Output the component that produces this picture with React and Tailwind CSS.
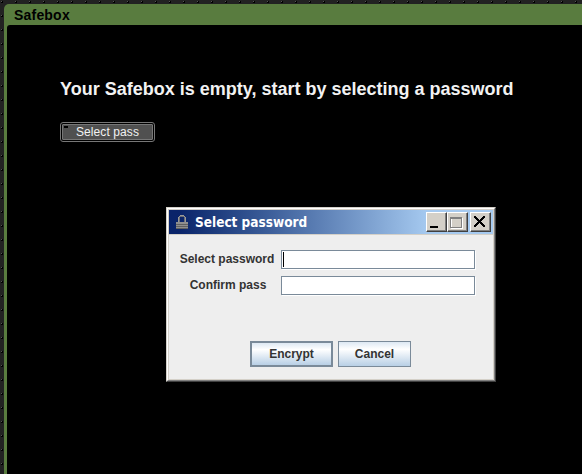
const bevel = "border border-t-white border-l-white border-r-[#404040] border-b-[#404040] bg-[#d4d0c8] shadow-[inset_-1px_-1px_0_#808080]";

function DotPattern() {
  return (
    <svg className="absolute inset-0" width="582" height="474" shapeRendering="crispEdges">
      <defs>
        <pattern id="dots" width="14" height="14" patternUnits="userSpaceOnUse">
          <rect width="14" height="14" fill="#222222" />
          <rect x="1" y="1" width="2" height="2" fill="#000" />
          <rect x="1" y="1" width="1" height="1" fill="#555" />
        </pattern>
      </defs>
      <rect width="582" height="474" fill="url(#dots)" />
    </svg>
  );
}

function Lock() {
  return (
    <svg width="12" height="15" viewBox="0 0 12 15" shapeRendering="crispEdges">
      <path d="M4 0h4v1H4zM3 1h6v1H3zM2 2h2v5H2zM8 2h2v5H8z" fill="#999999" />
      <path d="M4 1h4v1H4zM3 2h1v5H3zM8 2h1v5H8z" fill="#6c6e76" />
      <path d="M0 7h12v7H0z" fill="#8f8f8f" />
      <path d="M0 9h12v1H0zM0 11h12v1H0zM0 13h12v1H0z" fill="#606060" />
    </svg>
  );
}

function Field({ focus }) {
  return (
    <div className="flex h-[19px] w-[194px] items-center border border-[#7a8a99] bg-white shadow-[1px_1px_0_#fff]">
      {focus && <span className="ml-px h-[15px] w-px bg-black" />}
    </div>
  );
}

function Dialog() {
  return (
    <div className="absolute left-[166px] top-[207px] h-[175px] w-[330px] border border-t-[#d4d0c8] border-l-[#d4d0c8] border-r-[#404040] border-b-[#404040]">
      <div className="h-full border border-t-white border-l-white border-r-[#808080] border-b-[#808080]">
        <div className="flex h-full flex-col border border-[#d4d0c8] bg-[#eeeeee]">
          <div className="flex h-[25px] shrink-0 items-start border-b border-[#d4d0c8] bg-linear-to-r from-[#0a246a] from-3% to-[#a6caf0] to-80% pt-[2px] pr-[2px] pl-[7px]">
            <div className="mt-[3px] w-[19px]"><Lock /></div>
            <span className="whitespace-nowrap font-['DejaVu_Sans_Condensed','DejaVu_Sans',sans-serif] text-[13.5px] leading-5 font-bold text-white [font-stretch:condensed]">Select password</span>
            <div className="ml-auto flex h-5">
              <div className={`w-[21px] ${bevel}`}>
                <svg width="19" height="18" shapeRendering="crispEdges"><path d="M3 13h8v2H3z" /></svg>
              </div>
              <div className={`mr-[2px] w-[21px] ${bevel}`}>
                <svg width="19" height="18" shapeRendering="crispEdges" fill="none">
                  <path d="M3.500 5.500h11v10h-11z" stroke="#fff" />
                  <path d="M2 4h12v2H2zM2 6h1v9H2zM13 6h1v9h-1zM2 14h12v1H2z" fill="#808080" />
                </svg>
              </div>
              <div className={`w-[21px] ${bevel}`}>
                <svg width="19" height="18"><path d="M4 4l9 9M13 4l-9 9" stroke="#000" strokeWidth="2" strokeLinecap="square" shapeRendering="crispEdges" /></svg>
              </div>
            </div>
          </div>
          <div className="mt-[15px] flex flex-col gap-[7px] pl-[6px] font-['Liberation_Sans',Arial,sans-serif] text-[12px] font-bold text-[#333333]">
            <div className="flex h-[19px] items-center">
              <div className="mr-[2px] w-[104px] -translate-y-px text-center whitespace-nowrap">Select password</div>
              <Field focus />
            </div>
            <div className="flex h-[19px] items-center">
              <div className="mr-[2px] w-[104px] -translate-y-px pl-[2px] text-center whitespace-nowrap">Confirm pass</div>
              <Field />
            </div>
          </div>
          <div className="mt-[46px] flex gap-[5px] pl-[81px] font-['Liberation_Sans',Arial,sans-serif] text-[12px] font-bold text-[#333333]">
            <button className="h-[26px] w-[83px] border-2 border-[#7a8a99] bg-linear-to-b from-[#dde8f3] via-white via-30% to-[#b8cfe5]">Encrypt</button>
            <button className="h-[26px] w-[73px] border border-[#7a8a99] bg-linear-to-b from-[#dde8f3] via-white via-30% to-[#b8cfe5]">Cancel</button>
          </div>
        </div>
      </div>
    </div>
  );
}

export default function App() {
  return (
    <div className="relative h-[474px] w-[582px] overflow-hidden bg-[#222222] pt-1 pl-1 font-['Liberation_Sans',Arial,sans-serif]">
      <DotPattern />
      <div className="relative flex h-full flex-col rounded-tl-[5px] bg-[#597c3f] pl-[3px]">
        <div className="h-[21px] shrink-0 pl-[7px] text-[14px] leading-[23px] font-bold tracking-[0.2px] text-black">Safebox</div>
        <div className="flex-1 rounded-tl-[3px] bg-black pt-[53px] pl-[53px]">
          <h1 className="text-[18px] leading-[22px] font-bold whitespace-nowrap text-[#f2f2f2]">Your Safebox is empty, start by selecting a password</h1>
          <button className="relative mt-[22px] flex h-5 w-[95px] items-center justify-center rounded-[3px] border border-[#777] bg-black p-px font-['Liberation_Sans',Arial,sans-serif] text-[12px] tracking-[0.1px] text-[#f2f2f2]">
            <span className="flex h-full w-full items-center justify-center rounded-[1px] border border-[#777] bg-[#505050]">Select pass</span>
            <span className="absolute top-[3px] left-[3px] h-[2px] w-1 bg-black" />
          </button>
        </div>
      </div>
      <Dialog />
    </div>
  );
}
